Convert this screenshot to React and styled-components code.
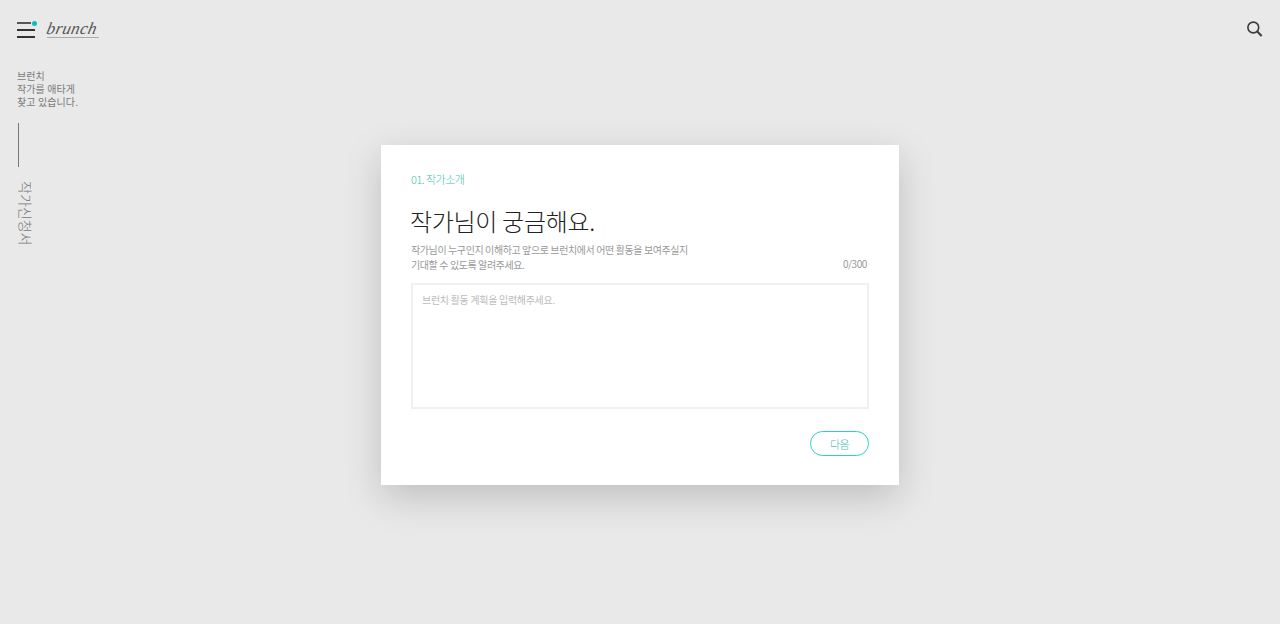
import React from "react";
import styled, { createGlobalStyle } from "styled-components";

const Global = createGlobalStyle`
  html, body {
    margin: 0;
    height: 100%;
    overflow: hidden;
    background: #e9e9e9;
    font-family: "Noto Sans CJK KR", "Noto Sans", sans-serif;
  }
`;

const Page = styled.div`
  display: grid;
  grid-template-columns: 1fr 518px 1fr;
  height: 624px;
`;

const Side = styled.aside`
  padding: 20px 0 0 17px;
`;

const LogoRow = styled.div`
  display: flex;
  align-items: flex-start;
  height: 49px;
`;

const Burger = styled.button`
  position: relative;
  display: flex;
  flex-direction: column;
  gap: 5px;
  width: 18px;
  margin: 2px 12px 0 0;
  padding: 0;
  border: 0;
  background: none;

  span {
    display: block;
    height: 2px;
    background: #333;
  }

  span:first-child {
    width: 14px;
    background: #555;
  }

  &:after {
    content: "";
    position: absolute;
    top: -1px;
    right: -2px;
    width: 5px;
    height: 5px;
    border-radius: 50%;
    background: #00c3bd;
  }
`;

const Logo = styled.div`
  width: 52px;
  height: 17px;
  border-bottom: 1px solid #aaa;
  font-family: "Liberation Serif", serif;
  font-style: italic;
  font-size: 17px;
  line-height: 17px;
  letter-spacing: 0.3px;
  color: #555;

  span {
    display: inline-block;
    transform: skewX(-12deg);
  }
`;

const Tagline = styled.p`
  margin: 0;
  font-size: 10px;
  line-height: 13px;
  letter-spacing: 0.1px;
  color: #7a7a7a;
`;

const Rule = styled.div`
  width: 1px;
  height: 44px;
  margin: 15px 0 14px 1px;
  background: #777;
`;

const VerticalLabel = styled.div`
  writing-mode: vertical-rl;
  text-orientation: sideways;
  margin-left: 1px;
  font-size: 14px;
  line-height: 16px;
  color: #777;
  font-weight: 300;
`;

const Modal = styled.main`
  box-sizing: border-box;
  align-self: start;
  height: 340px;
  margin-top: 145px;
  padding: 26px 30px 0 30px;
  background: #fff;
  box-shadow: 0 12px 36px rgba(0, 0, 0, 0.18);
`;

const Step = styled.div`
  font-size: 11px;
  line-height: 16px;
  letter-spacing: -0.5px;
  color: #3fbfb5;
  font-weight: 300;
`;

const Title = styled.h1`
  margin: 16px 0 0 -1px;
  font-size: 24px;
  line-height: 36px;
  font-weight: 300;
  letter-spacing: -0.3px;
  color: #222;
`;

const InfoRow = styled.div`
  display: flex;
  justify-content: space-between;
  align-items: flex-end;
  margin-top: 3px;
`;

const Help = styled.p`
  margin: 0;
  font-size: 10px;
  line-height: 15px;
  letter-spacing: -0.4px;
  color: #999;
`;

const Counter = styled.span`
  margin: 0 2px 1px 0;
  font-size: 10px;
  line-height: 15px;
  letter-spacing: -0.4px;
  color: #999;
`;

const Area = styled.textarea`
  display: block;
  box-sizing: border-box;
  width: 458px;
  height: 126px;
  margin: 11px 0 0;
  padding: 7px 9px;
  border: 2px solid #f0f0f0;
  outline: 0;
  resize: none;
  font-family: inherit;
  font-size: 10px;
  line-height: 16px;
  letter-spacing: -0.3px;

  &::placeholder {
    color: #bbb;
    opacity: 1;
  }
`;

const Footer = styled.div`
  display: flex;
  justify-content: flex-end;
  width: 458px;
  margin-top: 22px;
`;

const NextButton = styled.button`
  box-sizing: border-box;
  width: 59px;
  height: 25px;
  padding: 0;
  border: 1px solid #2fd0c8;
  border-radius: 13px;
  background: #fff;
  font-family: inherit;
  font-size: 11px;
  letter-spacing: -0.5px;
  font-weight: 300;
  color: #3fbfb5;
`;

const Tools = styled.div`
  display: flex;
  justify-content: flex-end;
  padding: 20px 17px 0 0;
`;

const SearchIcon = () => (
  <svg width="17" height="18" viewBox="0 0 17 18" fill="none" stroke="#3c3c3c">
    <circle cx="7.3" cy="7.5" r="5.4" strokeWidth="1.6" />
    <path d="M11.3 11.5l4.3 4.5" strokeWidth="2" />
  </svg>
);

export default function App() {
  return (
    <>
      <Global />
      <Page>
        <Side>
          <LogoRow>
            <Burger aria-label="메뉴">
              <span />
              <span />
              <span />
            </Burger>
            <Logo>
              <span>brunch</span>
            </Logo>
          </LogoRow>
          <Tagline>
            브런치
            <br />
            작가를 애타게
            <br />
            찾고 있습니다.
          </Tagline>
          <Rule />
          <VerticalLabel>작가신청서</VerticalLabel>
        </Side>
        <Modal>
          <Step>01. 작가소개</Step>
          <Title>작가님이 궁금해요.</Title>
          <InfoRow>
            <Help>
              작가님이 누구인지 이해하고 앞으로 브런치에서 어떤 활동을 보여주실지
              <br />
              기대할 수 있도록 알려주세요.
            </Help>
            <Counter>0/300</Counter>
          </InfoRow>
          <Area placeholder="브런치 활동 계획을 입력해주세요." />
          <Footer>
            <NextButton>다음</NextButton>
          </Footer>
        </Modal>
        <Tools>
          <SearchIcon />
        </Tools>
      </Page>
    </>
  );
}
